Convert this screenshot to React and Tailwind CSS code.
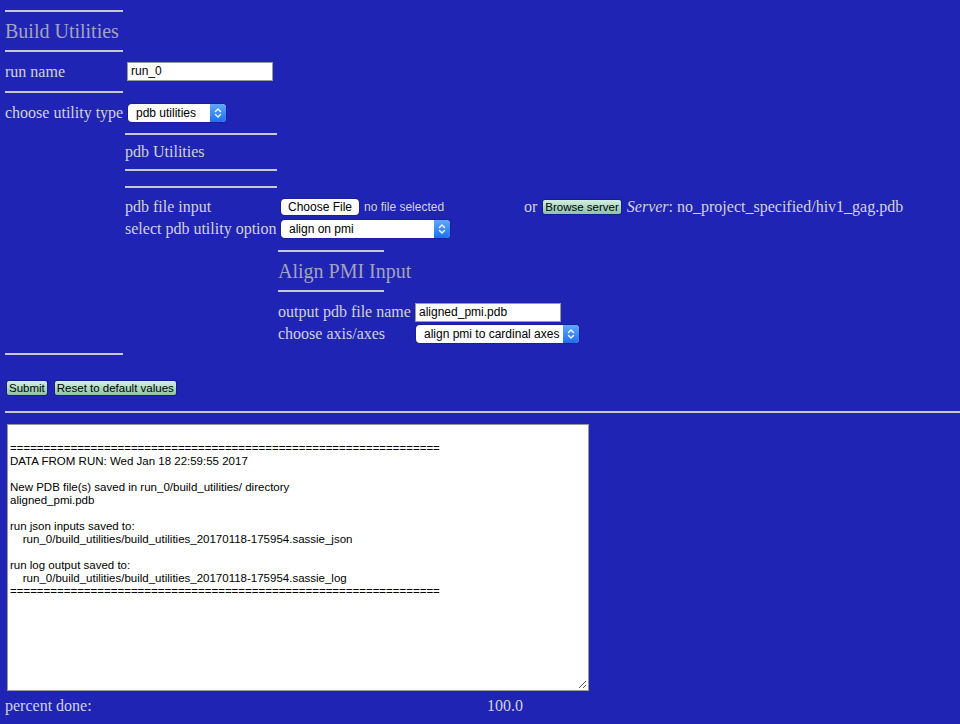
import React from 'react'

const Line = ({ w }) => <div className={`h-[2px] bg-[#c8c8d0] ${w}`}></div>

const MacSelect = ({ value, w }) => (
    <div className={`h-[18px] ${w} flex items-stretch rounded-[4px] bg-white overflow-hidden shadow-[0_0_0_1px_rgba(0,0,0,0.15)]`}>
        <div className="flex-1 pl-[8px] text-[12px] leading-[18px] text-black font-['Liberation_Sans',sans-serif] whitespace-nowrap overflow-hidden">{value}</div>
        <div className="w-[16px] bg-gradient-to-b from-[#5fa8fb] to-[#1c6ff0] flex items-center justify-center">
            <svg width="8" height="12" viewBox="0 0 8 12" fill="none" stroke="white" strokeWidth="1.4" strokeLinecap="round" strokeLinejoin="round">
                <path d="M1.5 4.5 L4 2 L6.5 4.5" />
                <path d="M1.5 7.5 L4 10 L6.5 7.5" />
            </svg>
        </div>
    </div>
)

const TextInput = ({ value, w }) => (
    <div className={`h-[19px] ${w} bg-white border border-[#9a9a9a] pl-[3px] text-[12px] leading-[17px] text-black font-['Liberation_Sans',sans-serif]`}>{value}</div>
)

const GreenBtn = ({ children }) => (
    <span className="inline-block h-[14px] px-[2px] rounded-[2px] bg-gradient-to-b from-[#d3f0e3] to-[#8cc2a6] text-[11.5px] leading-[14px] text-black font-['Liberation_Sans',sans-serif] shadow-[0_0_0_1px_rgba(0,0,0,0.2)]">{children}</span>
)

const eq = '='.repeat(64)

const log = [
    '',
    eq,
    'DATA FROM RUN: Wed Jan 18 22:59:55 2017',
    '',
    'New PDB file(s) saved in run_0/build_utilities/ directory',
    'aligned_pmi.pdb',
    '',
    'run json inputs saved to:',
    '    run_0/build_utilities/build_utilities_20170118-175954.sassie_json',
    '',
    'run log output saved to:',
    '    run_0/build_utilities/build_utilities_20170118-175954.sassie_log',
    eq,
]

const App = () => {
    return (
        <main className="w-[960px] h-[724px] bg-[#1f24b4] overflow-hidden font-['Liberation_Serif',serif] text-[16px] text-[#d2d2dc]">
            <div className="pl-[5px]">
                <div className="h-[10px]"></div>
                <Line w="w-[118px]" />
                <div className="h-[38px] flex items-center text-[20px] text-[#a4a3bc]">Build Utilities</div>
                <Line w="w-[118px]" />
                <div className="h-[39px] flex items-center">
                    <div className="w-[122px]">run name</div>
                    <TextInput value="run_0" w="w-[146px]" />
                </div>
                <Line w="w-[118px]" />
                <div className="h-[40px] flex items-center">
                    <div className="w-[123px] whitespace-nowrap">choose utility type</div>
                    <MacSelect value="pdb utilities" w="w-[98px]" />
                </div>

                {/* pdb utilities block */}
                <div className="pl-[120px]">
                    <Line w="w-[152px]" />
                    <div className="h-[34px] flex items-center">pdb Utilities</div>
                    <Line w="w-[152px]" />
                    <div className="h-[15px]"></div>
                    <Line w="w-[152px]" />
                    <div className="h-[8px]"></div>
                    <div className="h-[22px] flex items-center">
                        <div className="w-[156px]">pdb file input</div>
                        <div className="w-[243px] flex items-center gap-[5px]">
                            <span className="h-[16px] px-[7px] rounded-[4px] bg-white text-black text-[12px] leading-[16px] font-['Liberation_Sans',sans-serif] shadow-[0_0_0_1px_rgba(0,0,0,0.15)]">Choose File</span>
                            <span className="text-[12px] font-['Liberation_Sans',sans-serif] text-[#d2d2dc]">no file selected</span>
                        </div>
                        <div className="flex items-center whitespace-nowrap">
                            <span className="mr-[6px]">or</span>
                            <GreenBtn>Browse server</GreenBtn>
                            <span className="ml-[6px] italic">Server</span>
                            <span>: no_project_specified/hiv1_gag.pdb</span>
                        </div>
                    </div>
                    <div className="h-[22px] flex items-center">
                        <div className="w-[156px] whitespace-nowrap">select pdb utility option</div>
                        <MacSelect value="align on pmi" w="w-[169px]" />
                    </div>

                    {/* align pmi block */}
                    <div className="pl-[153px] pt-[10px]">
                        <Line w="w-[106px]" />
                        <div className="h-[38px] flex items-center text-[20px] text-[#a4a3bc]">Align PMI Input</div>
                        <Line w="w-[106px]" />
                        <div className="h-[9px]"></div>
                        <div className="h-[22px] flex items-center">
                            <div className="w-[137px] whitespace-nowrap">output pdb file name</div>
                            <TextInput value="aligned_pmi.pdb" w="w-[146px]" />
                        </div>
                        <div className="h-[22px] flex items-center">
                            <div className="w-[138px] whitespace-nowrap">choose axis/axes</div>
                            <MacSelect value="align pmi to cardinal axes" w="w-[163px]" />
                        </div>
                    </div>
                </div>

                <div className="h-[8px]"></div>
                <Line w="w-[118px]" />
                <div className="h-[26px]"></div>
                <div className="flex items-center gap-[8px] pl-[2px] h-[14px]">
                    <GreenBtn>Submit</GreenBtn>
                    <GreenBtn>Reset to default values</GreenBtn>
                </div>
                <div className="h-[16px]"></div>
                <Line w="w-full" />
                <div className="h-[11px]"></div>
                <div className="ml-[2px] w-[582px] h-[267px] bg-white border border-[#9a9a9a] px-[2px] pt-[4px] relative">
                    {log.map((l, i) => (
                        <div key={i} className="h-[13px] text-[11.5px] leading-[13px] text-black whitespace-pre font-['Liberation_Sans',sans-serif]">{l}</div>
                    ))}
                    <svg className="absolute right-[1px] bottom-[1px]" width="9" height="9" viewBox="0 0 9 9" stroke="#555" strokeWidth="1">
                        <path d="M8 1 L1 8" />
                        <path d="M8 5 L5 8" />
                    </svg>
                </div>
                <div className="h-[30px] flex items-center">
                    <div className="w-[482px]">percent done:</div>
                    <div>100.0</div>
                </div>
            </div>
        </main>
    )
}

export default App
